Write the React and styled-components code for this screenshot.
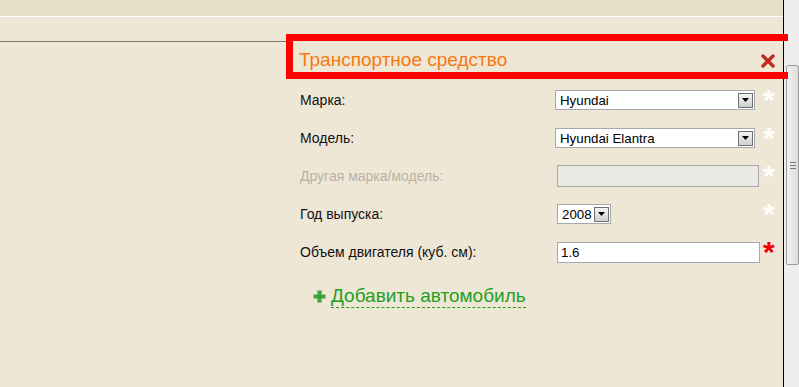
import styled, { createGlobalStyle } from "styled-components";

const GlobalStyle = createGlobalStyle`
    html, body {
        margin: 0;
        padding: 0;
        background: #efe7d6;
        font-family: "Liberation Sans", Arial, sans-serif;
    }
`;

const rows = [
    { label: "Марка:", kind: "select", value: "Hyundai", width: 200, offset: 0 },
    { label: "Модель:", kind: "select", value: "Hyundai Elantra", width: 200, offset: 0 },
    { label: "Другая марка/модель:", kind: "disabled", width: 202, offset: 2 },
    { label: "Год выпуска:", kind: "select", value: "2008", width: 54, offset: 2 },
    { label: "Объем двигателя (куб. см):", kind: "input", value: "1.6", width: 203, offset: 2, required: true },
];

function App() {
    return (
        <Page>
            <GlobalStyle />
            <Main>
                <TopBand />
                <Content>
                    <LeftCol>
                        <Rule />
                    </LeftCol>
                    <Panel>
                        <Frame />
                        <Header>
                            <Title>Транспортное средство</Title>
                            <Close viewBox="0 0 14 14">
                                <path d="M2 2 L12 12 M12 2 L2 12" stroke="#c22a24" strokeWidth="3.4" strokeLinecap="round" />
                            </Close>
                        </Header>
                        <Form>
                            {rows.map((r) => (
                                <Row key={r.label}>
                                    <Label $disabled={r.kind === "disabled"}>{r.label}</Label>
                                    <Control $offset={r.offset}>
                                        {r.kind === "select" && (
                                            <Select $width={r.width}>
                                                <SelectText>{r.value}</SelectText>
                                                <Arrow>
                                                    <svg width="7" height="4" viewBox="0 0 7 4">
                                                        <path d="M0 0 H7 L3.5 4 Z" fill="#000" />
                                                    </svg>
                                                </Arrow>
                                            </Select>
                                        )}
                                        {r.kind === "disabled" && <Field $width={r.width} $disabled />}
                                        {r.kind === "input" && <Field $width={r.width}>{r.value}</Field>}
                                    </Control>
                                    <Star $required={r.required}>*</Star>
                                </Row>
                            ))}
                        </Form>
                        <AddLink>
                            <Plus viewBox="0 0 12 12">
                                <path d="M6 0.5 V11.5 M0.5 6 H11.5" stroke="#3aa33a" strokeWidth="3.8" />
                            </Plus>
                            <AddText>Добавить автомобиль</AddText>
                        </AddLink>
                    </Panel>
                </Content>
            </Main>
            <Scrollbar>
                <Thumb>
                    <Grip />
                </Thumb>
            </Scrollbar>
        </Page>
    );
}

export default App;

const Page = styled.div`
    display: flex;
    width: 799px;
    height: 387px;
    overflow: hidden;
`;

const Main = styled.div`
    width: 783px;
    flex-shrink: 0;
    border-right: 1px solid #000;
    display: flex;
    flex-direction: column;
`;

const TopBand = styled.div`
    height: 16px;
    background: #e7dec6;
    border-bottom: 1px solid #ffffff;
`;

const Content = styled.div`
    display: flex;
    flex: 1;
`;

const LeftCol = styled.div`
    width: 286px;
    flex-shrink: 0;
`;

const Rule = styled.div`
    margin-top: 24px;
    height: 1px;
    background: #7a7670;
`;

const Panel = styled.div`
    position: relative;
    flex: 1;
    min-width: 0;
    margin-top: 17px;
`;

const Frame = styled.div`
    position: absolute;
    left: 0;
    top: 0;
    width: 495px;
    height: 31px;
    border: 7px solid #ff0000;
    border-right: none;
    pointer-events: none;
    z-index: 2;
`;

const Header = styled.div`
    height: 45px;
    display: flex;
    align-items: center;
    justify-content: space-between;
    padding: 0 8px 0 13px;
`;

const Title = styled.div`
    font-size: 19px;
    color: #f7780f;
    margin-top: 7px;
`;

const Close = styled.svg`
    width: 14px;
    height: 14px;
    margin-top: 9px;
`;

const Form = styled.div`
    margin-top: 2px;
    padding-left: 14px;
`;

const Row = styled.div`
    display: grid;
    grid-template-columns: 255px 207px 21px;
    align-items: center;
    height: 38px;
`;

const Label = styled.div`
    font-size: 14px;
    color: ${(p) => (p.$disabled ? "#b8b2a6" : "#111")};
`;

const Control = styled.div`
    padding-left: ${(p) => p.$offset}px;
    display: flex;
`;

const Select = styled.div`
    width: ${(p) => p.$width}px;
    height: 20px;
    box-sizing: border-box;
    border: 1px solid #a5a9ad;
    background: #fff;
    display: flex;
    align-items: center;
    justify-content: space-between;
    padding: 0 1px 0 4px;
`;

const SelectText = styled.span`
    font-size: 13.3px;
    color: #000;
`;

const Arrow = styled.div`
    width: 15px;
    height: 15px;
    box-sizing: border-box;
    border: 1px solid #6f6f6f;
    background: linear-gradient(#f4f4f4, #cfcfcf);
    display: flex;
    align-items: center;
    justify-content: center;
`;

const Field = styled.div`
    width: ${(p) => p.$width}px;
    height: ${(p) => (p.$disabled ? 22 : 21)}px;
    box-sizing: border-box;
    border: 1px solid #a5a9ad;
    background: ${(p) => (p.$disabled ? "#ebe9e3" : "#fff")};
    font-size: 13.3px;
    color: #000;
    display: flex;
    align-items: center;
    padding-left: 3px;
`;

const Star = styled.div`
    font-size: 30px;
    font-weight: bold;
    line-height: 1;
    color: ${(p) => (p.$required ? "#ee0000" : "#ffffff")};
    margin-top: -1px;
    padding-left: 1px;
`;

const AddLink = styled.div`
    display: flex;
    align-items: center;
    gap: 5px;
    margin-top: 14px;
    padding-left: 27px;
`;

const Plus = styled.svg`
    width: 13px;
    height: 13px;
`;

const AddText = styled.span`
    font-size: 19px;
    color: #22a022;
    border-bottom: 1px dashed #22a022;
    line-height: 22px;
`;

const Scrollbar = styled.div`
    width: 15px;
    background: #eeeeee;
    padding-top: 65px;
`;

const Thumb = styled.div`
    height: 198px;
    margin-left: 2px;
    border: 1px solid #9b9b9b;
    border-radius: 2px;
    background: linear-gradient(90deg, #f2f2f2, #dcdcdc);
    display: flex;
    align-items: center;
    justify-content: center;
`;

const Grip = styled.div`
    width: 6px;
    height: 5px;
    border-top: 1px solid #777;
    border-bottom: 1px solid #777;
    position: relative;
    &::after {
        content: "";
        position: absolute;
        left: 0;
        right: 0;
        top: 2px;
        height: 1px;
        background: #777;
    }
`;
